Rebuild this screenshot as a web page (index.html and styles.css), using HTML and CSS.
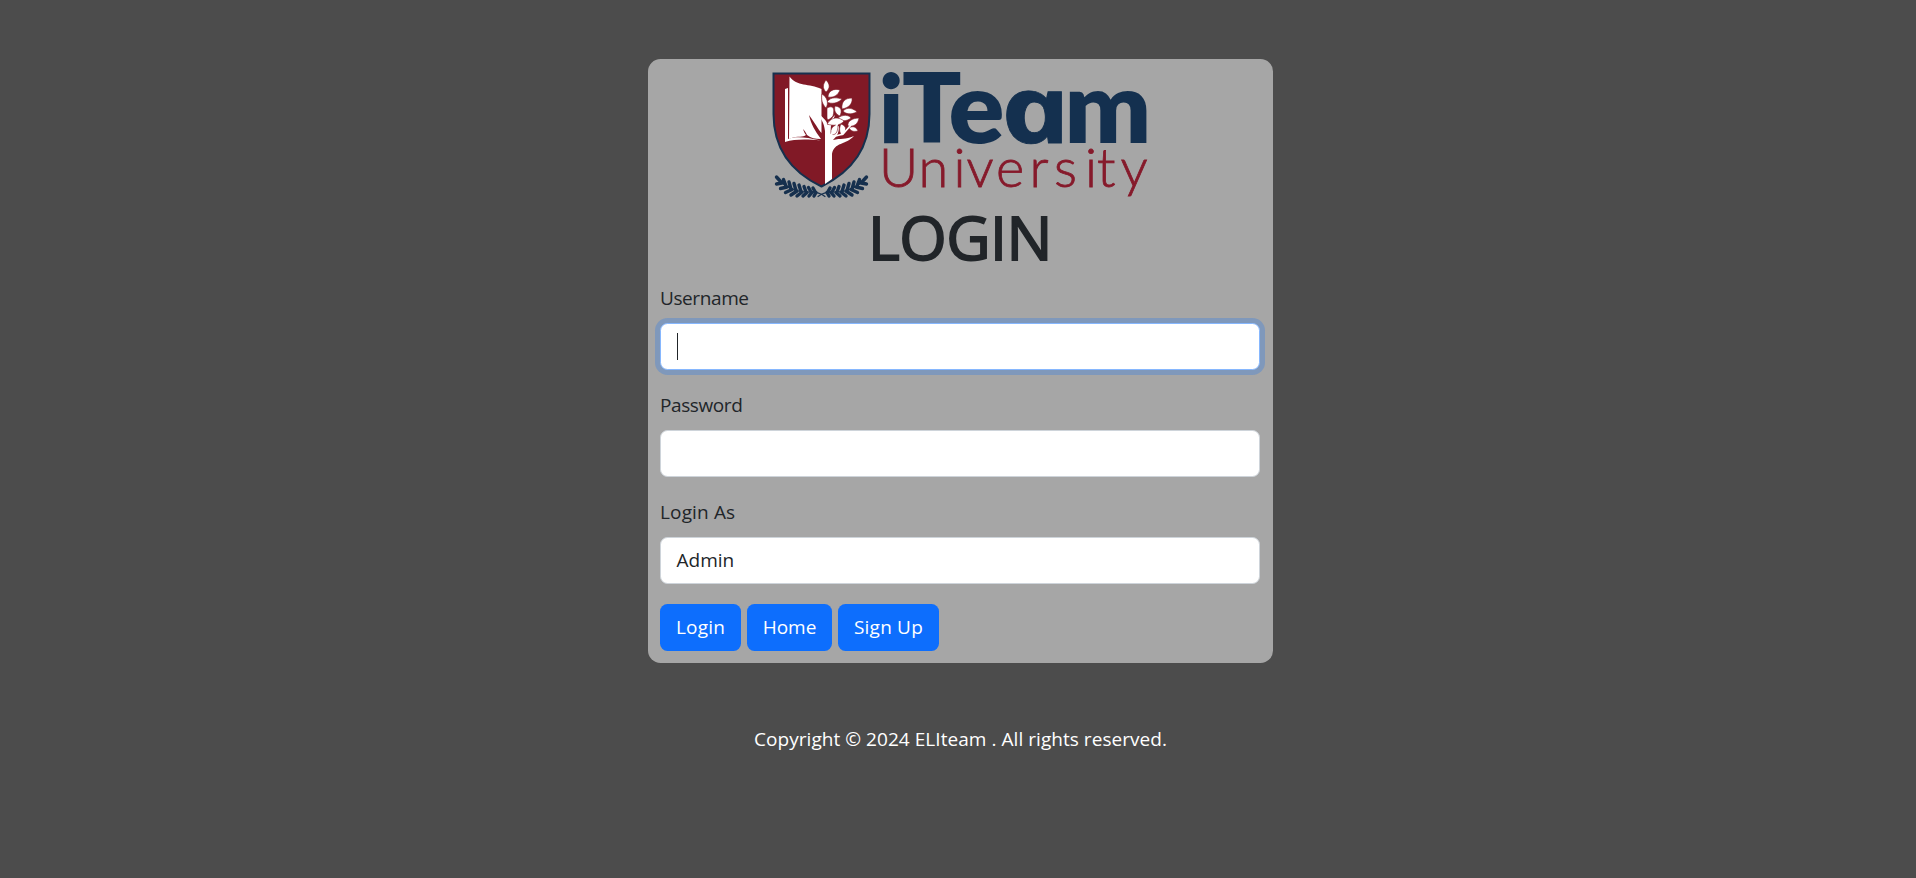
FILE: index.html
```html
<!DOCTYPE html>
<html lang="en">
<head>
<meta charset="utf-8">
<title>Login</title>
<link rel="stylesheet" href="styles.css">
</head>
<body>
<main class="page">
  <form class="card">
    <svg class="logo" viewBox="0 0 376 126" role="img" aria-label="iTeam University">
      <path class="crest" d="M1.500 1.500H97.500V42C97.500 76 79 100 49.500 114.500C19 100 1.500 76 1.500 42Z"/>
      <path class="white" d="M17.500 4.500C25 15 37 11 49.500 17V61C46 57 43 51 37 43C39 52 43 59 49 67C43 67 39 66 35 63C34 61 33 59 31 57C32 60 33 62 34 63C31 66 27 63 17 67Z"/>
      <path class="white" d="M13 17L16 16V67C23 64 33 65 49 68.500C34 67 23 67 13 70Z"/>
      <path class="white" d="M53 112V59C52 50 49 47 45 41C51 45 54 48 56 53C58 49 60 46 63 43C61 49 58 53 59 59C62 56 64 55 67 54C67 62 64 65 61 68C69 66 73 68 82 64C74 73 62 70 60 82V107Z"/>
      <g class="white leaves" transform="translate(1 0)">
        <path d="M53 8C59 14 55 18 53 20C49 16 50 12 53 8Z"/>
        <path d="M55 25C55 19 61 16 67 18C65 23 61 26 55 25Z"/>
        <path d="M54 30C58 24 65 26 69 27C64 32 58 32 54 30Z"/>
        <path d="M49 22C54 25 56 31 53 36C49 32 48 27 49 22Z"/>
        <path d="M54 36C60 33 62 36 60 44C57 47 54 50 54 45Z"/>
        <path d="M62 34C69 35 69 39 67 44C62 42 61 38 62 34Z"/>
        <path d="M69 37C68 29 73 26 79 26C80 32 75 36 69 37Z"/>
        <path d="M70 39C75 34 81 37 84 40C77 43 73 42 70 39Z"/>
        <path d="M65 46C70 42 76 43 78 46C73 50 68 49 65 46Z"/>
        <path d="M54 52C59 44 66 45 71 49C67 54 60 54 54 52Z"/>
        <path d="M75 54C74 49 80 46 86 46C85 52 81 55 75 54Z"/>
        <path d="M76 56C80 53 84 56 85 59C80 60 78 59 76 56Z"/>
        <path d="M68 52C74 54 74 59 69 64C66 60 66 56 68 52Z"/>
        <path d="M65 53C65 61 62 64 58 62C57 57 60 53 65 53Z"/>
      </g>
      <path class="branch" d="M58 65L62 58L67 49M60 65L71 62L79 53"/>
      <g id="wreath" class="wreath">
        <path class="stem" d="M5 106Q16 120 36 120Q46 119 53 124.500"/>
        <path class="leaf" d="M9 110L4.500 105M14 114L11.500 107.500M19 117L17 110M24 118.500L22 111.500M29 119.500L27 113M34 120L32 114.500M39 120L36.500 115.500M43 119.500L41 116M10 111L4.500 112M15 115L8.500 116.500M20 117.500L13.500 120.500M25 119L19 123M30 120L25 124M35 120.500L31 124M40 120.500L37 124M44 120.500L42 124"/>
      </g>
      <use href="#wreath" transform="translate(99 0) scale(-1 1)"/>
      <g class="team">
        <text transform="translate(107 70.700) scale(.93 .970)">i</text>
        <text transform="translate(130 70.700) scale(1 .99)">T</text>
        <text transform="translate(176.500 70.700) scale(1.060 1)">e</text>
        <text class="team-a" transform="translate(235.500 70.700) scale(1.270 1.020) skewX(12)">a</text>
        <text transform="translate(292.500 70.700) scale(1.040 1)">m</text>
      </g>
      <text class="university" y="115" x="107 146.500 181.500 194.500 224 257.500 282 313 325 348.500">University</text>
    </svg>
    <h1 class="title">LOGIN</h1>
    <div class="field">
      <label class="label" for="username">Username</label>
      <div class="control control-focus" id="username"><span class="caret"></span></div>
    </div>
    <div class="field">
      <label class="label" for="password">Password</label>
      <div class="control" id="password"></div>
    </div>
    <div class="field">
      <label class="label label-role" for="role">Login As</label>
      <div class="control" id="role">Admin</div>
    </div>
    <div class="actions">
      <button type="button" class="btn login">Login</button>
      <button type="button" class="btn home">Home</button>
      <button type="button" class="btn signup">Sign Up</button>
    </div>
  </form>
  <footer class="footer">Copyright © 2024 ELIteam . All rights reserved.</footer>
</main>
</body>
</html>
```
FILE: styles.css
```css
* { box-sizing: border-box; }
body {
  margin: 0;
  height: 878px;
  overflow: hidden;
  background: #4c4c4c;
  color: #212529;
  font: 19px/30px "Open Sans", "Noto Sans", sans-serif;
}
.page { display: flex; flex-direction: column; align-items: center; padding: 59px 0 0 5px; }
.card {
  width: 625px;
  height: 603.500px;
  padding: 12.500px 13px 12.500px 12px;
  border-radius: 12.500px;
  background: #a6a6a6;
}
.logo { display: block; width: 376px; height: 126px; margin: 0 auto; overflow: visible; }
.crest { fill: #811926; stroke: #16304e; stroke-width: 2; }
.white { fill: #fff; }
.leaves { stroke: #811926; stroke-width: .6; }
.branch { fill: none; stroke: #fff; stroke-width: 1.800; }
.wreath { fill: none; stroke: #16304e; stroke-linecap: round; }
.stem { stroke-width: 1.200; }
.leaf { stroke-width: 3.400; }
.team { fill: #14304f; font: 800 98px Lato, sans-serif; }
.team-a { stroke: #14304f; stroke-width: .8; font: italic 700 92px "Open Sans", sans-serif; }
.university { fill: #861a2b; stroke: #861a2b; stroke-width: .8; font: 300 54px Lato, sans-serif; }
.title {
  margin: 1.500px 0 8.500px;
  text-align: center;
  font: 400 61px/75px "Open Sans", "Noto Sans", sans-serif;
  letter-spacing: -.5px;
  -webkit-text-stroke: 1.800px #212529;
}
.field { margin-bottom: 20px; }
.label { display: block; height: 30px; margin-bottom: 10px; letter-spacing: -.4px; }
.label-role { letter-spacing: .15px; }
.control {
  display: flex;
  align-items: center;
  width: 600px;
  height: 47px;
  padding: 0 15.500px;
  border: 1px solid #ced4da;
  border-radius: 7.500px;
  background: #fff;
}
.control-focus { border-color: #86b7fe; box-shadow: 0 0 0 5px rgba(13, 110, 253, .25); }
.caret { width: 1px; height: 27px; background: #212529; }
.actions { display: flex; gap: 6px; }
.btn {
  height: 47px;
  padding: 0;
  border: 0;
  border-radius: 7.500px;
  background: #0d6efd;
  color: #fff;
  font: inherit;
  letter-spacing: .2px;
}
.login { width: 81px; }
.home { width: 85px; letter-spacing: 0; }
.signup { width: 101px; }
.footer { margin-top: 61px; color: #fff; letter-spacing: .05px; white-space: nowrap; }
```
